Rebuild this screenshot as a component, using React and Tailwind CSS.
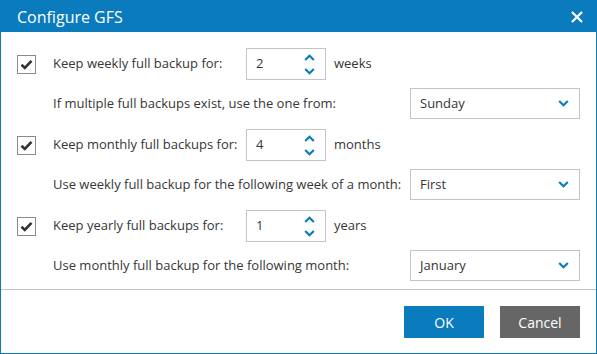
import React from "react";

const Check = () => (
  <div className="w-[19px] h-[19px] border border-[#8a8a8a] bg-white flex items-center justify-center shrink-0">
    <svg width="13" height="11" viewBox="0 0 13 11">
      <path d="M1.5 5.8 L4.8 9 L11.5 1.8" fill="none" stroke="#333" strokeWidth="2.6" />
    </svg>
  </div>
);

const Chevron = ({ up }) => (
  <svg width="11" height="7" viewBox="0 0 11 7">
    <path
      d={up ? "M1.2 6 L5.5 1.8 L9.8 6" : "M1.2 1 L5.5 5.2 L9.8 1"}
      fill="none"
      stroke="#0a7bbd"
      strokeWidth="2.2"
    />
  </svg>
);

const Spin = ({ value }) => (
  <div className="w-[80px] h-[32px] border border-[#c4c4c4] flex items-center pl-[9px] pr-[10px] shrink-0">
    <span className="flex-1">{value}</span>
    <div className="flex flex-col gap-[7px] items-center">
      <Chevron up />
      <Chevron />
    </div>
  </div>
);

const Select = ({ value }) => (
  <div className="ml-auto w-[170px] h-[31px] border border-[#c4c4c4] flex items-center pl-[9px] pr-[10px]">
    <span className="flex-1">{value}</span>
    <Chevron />
  </div>
);

const Group = ({ label, value, unit, sub, option, first }) => (
  <div className={first ? "" : "mt-[10px]"}>
    <div className="flex items-center h-[32px]">
      <Check />
      <span className="ml-[17px] w-[193px]">{label}</span>
      <Spin value={value} />
      <span className="ml-2">{unit}</span>
    </div>
    <div className="flex items-center h-[31px] mt-2 pl-[36px]">
      <span>{sub}</span>
      <Select value={option} />
    </div>
  </div>
);

export default function App() {
  return (
    <div
      className="w-[597px] h-[354px] border border-[#0a7bbd] bg-white flex flex-col text-[13px] text-[#363636]"
      style={{ fontFamily: '"Open Sans", "Noto Sans", sans-serif' }}
    >
      <div className="h-[31px] bg-[#0a7bbd] flex items-center justify-between pl-4 pr-[13px] text-white shrink-0">
        <span className="text-[16px]">Configure GFS</span>
        <svg width="12" height="12" viewBox="0 0 12 12">
          <path d="M1 1 L11 11 M11 1 L1 11" stroke="#fff" strokeWidth="2.2" />
        </svg>
      </div>
      <div className="pt-4 pl-4 pr-4 pb-2 border-b border-[#c2c2c2]">
        <Group
          first
          label="Keep weekly full backup for:"
          value="2"
          unit="weeks"
          sub="If multiple full backups exist, use the one from:"
          option="Sunday"
        />
        <Group
          label="Keep monthly full backups for:"
          value="4"
          unit="months"
          sub="Use weekly full backup for the following week of a month:"
          option="First"
        />
        <Group
          label="Keep yearly full backups for:"
          value="1"
          unit="years"
          sub="Use monthly full backup for the following month:"
          option="January"
        />
      </div>
      <div className="flex justify-end gap-4 pt-4 pr-4">
        <button className="w-[80px] h-8 bg-[#0a7bbd] text-white text-[14px]">OK</button>
        <button className="w-[80px] h-8 bg-[#666666] text-white text-[14px]">Cancel</button>
      </div>
    </div>
  );
}
